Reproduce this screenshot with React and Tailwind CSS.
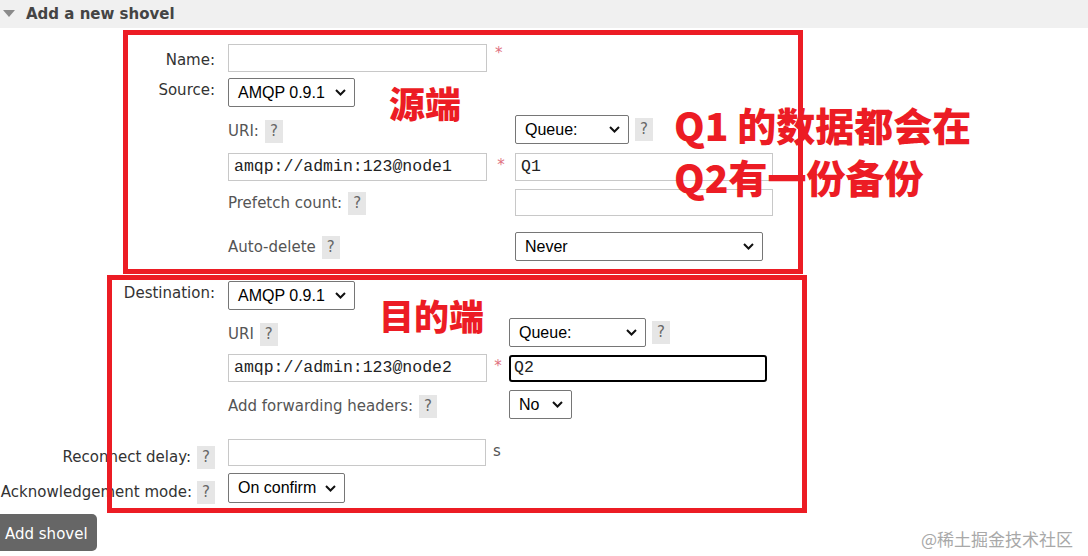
import React from 'react';

const sans = "font-['DejaVu_Sans',Verdana,sans-serif]";
const arial = "font-['Liberation_Sans',Arial,sans-serif]";
const mono = "font-['Liberation_Mono','Courier_New',monospace]";
const cjk = "font-['Noto_Sans_CJK_SC',sans-serif]";

function Help() {
  return (
    <span className={`inline-flex shrink-0 items-center justify-center w-[18px] h-[23px] bg-[#e6e6e6] text-[#666] text-[15px] ${sans}`}>
      ?
    </span>
  );
}

function Chevron() {
  return (
    <svg width="11" height="7" viewBox="0 0 11 7" className="shrink-0">
      <polyline points="1,1 5.5,5.5 10,1" fill="none" stroke="#111" strokeWidth="2" />
    </svg>
  );
}

function Select({ text, className }) {
  return (
    <div className={`flex items-center justify-between border border-[#767676] rounded-[2px] bg-white pl-[9px] pr-[8px] text-[16px] text-black ${arial} ${className}`}>
      <span>{text}</span>
      <Chevron />
    </div>
  );
}

function Input({ value, className }) {
  return (
    <div className={`flex items-center border border-[#c8c8c8] bg-white pl-[5px] text-[16.5px] text-[#222] ${mono} ${className}`}>
      {value}
    </div>
  );
}

function Star({ className }) {
  return <span className={`text-[#e07080] text-[15px] ${sans} ${className}`}>*</span>;
}

export default function App() {
  return (
    <div className="relative w-[1088px] h-[556px] bg-white overflow-hidden">
      {/* header */}
      <div className="flex items-center h-[28px] bg-[#f0f0f0]">
        <svg width="12" height="8" viewBox="0 0 12 8" className="ml-[3px]">
          <polygon points="0,0 12,0 6,7" fill="#8a8a8a" />
        </svg>
        <span className={`ml-[11px] text-[15px] font-bold text-[#444] ${sans}`}>Add a new shovel</span>
      </div>

      <div className={`text-[15px] text-[#333] ${sans}`}>
        {/* Name */}
        <div className="flex items-center mt-[16px] h-[28px]">
          <div className="w-[215px] text-right pt-[5px]">Name:</div>
          <div className="ml-[13px] flex items-start h-full">
            <Input value="" className="w-[259px] h-[28px]" />
            <Star className="ml-[8px] -mt-[2px]" />
          </div>
        </div>

        {/* Source */}
        <div className="flex items-center mt-[6px] h-[29px]">
          <div className="w-[215px] text-right -mt-[4px]">Source:</div>
          <Select text="AMQP 0.9.1" className="ml-[13px] w-[127px] h-[29px]" />
        </div>

        <div className="ml-[228px] text-[15px] text-[#555]">
          <div className="flex items-center mt-[8px] h-[29px]">
            <div className="w-[287px] flex items-center gap-[6px] pt-[4px]">
              <span>URI:</span>
              <Help />
            </div>
            <Select text="Queue:" className="w-[114px] h-[29px]" />
            <span className="ml-[6px]"><Help /></span>
          </div>
          <div className="flex items-center mt-[9px] h-[28px]">
            <Input value="amqp://admin:123@node1" className="w-[259px] h-[28px]" />
            <Star className="w-[28px] text-center -mt-[4px]" />
            <Input value="Q1" className="w-[258px] h-[28px]" />
          </div>
          <div className="flex items-center mt-[8px] h-[27px]">
            <div className="w-[287px] flex items-center gap-[6px] pt-[2px]">
              <span>Prefetch count:</span>
              <Help />
            </div>
            <Input value="" className="w-[258px] h-[27px]" />
          </div>
          <div className="flex items-center mt-[16px] h-[29px]">
            <div className="w-[287px] flex items-center gap-[6px] pt-[2px]">
              <span>Auto-delete</span>
              <Help />
            </div>
            <Select text="Never" className="w-[248px] h-[29px]" />
          </div>
        </div>

        {/* Destination */}
        <div className="flex items-center mt-[20px] h-[29px]">
          <div className="w-[215px] text-right -mt-[4px]">Destination:</div>
          <Select text="AMQP 0.9.1" className="ml-[13px] w-[127px] h-[29px]" />
        </div>

        <div className="ml-[228px] text-[15px] text-[#555]">
          <div className="flex items-center mt-[8px] h-[29px]">
            <div className="w-[281px] flex items-center gap-[6px] pt-[3px]">
              <span>URI</span>
              <Help />
            </div>
            <Select text="Queue:" className="w-[137px] h-[29px]" />
            <span className="ml-[6px]"><Help /></span>
          </div>
          <div className="flex items-center mt-[7px] h-[28px]">
            <Input value="amqp://admin:123@node2" className="w-[259px] h-[28px]" />
            <Star className="w-[22px] text-center -mt-[4px]" />
            <div className={`flex items-center w-[258px] h-[27px] border-2 border-black rounded-[3px] pl-[3px] text-[16.5px] text-[#222] ${mono}`}>
              Q2
            </div>
          </div>
          <div className="flex items-center mt-[8px] h-[29px]">
            <div className="w-[281px] flex items-center gap-[6px] pt-[3px]">
              <span>Add forwarding headers:</span>
              <Help />
            </div>
            <Select text="No" className="w-[63px] h-[29px]" />
          </div>
        </div>

        {/* Reconnect delay */}
        <div className="flex items-center mt-[20px] h-[27px]">
          <div className="w-[215px] shrink-0 flex items-center justify-end gap-[6px] pt-[10px]">
            <span className="whitespace-nowrap">Reconnect delay:</span>
            <Help />
          </div>
          <Input value="" className="ml-[13px] w-[258px] h-[27px]" />
          <span className="ml-[7px] text-[15px] text-[#555] -mt-[2px]">s</span>
        </div>

        {/* Ack mode */}
        <div className="flex items-center mt-[7px] h-[30px]">
          <div className="w-[215px] shrink-0 flex items-center justify-end gap-[5px] pt-[8px]">
            <span className="whitespace-nowrap">Acknowledgement mode:</span>
            <Help />
          </div>
          <Select text="On confirm" className="ml-[13px] w-[117px] h-[30px]" />
        </div>

        <button className={`mt-[11px] h-[37px] w-[97px] rounded-r-[5px] bg-[#666] text-white text-[15px] text-left pl-[5px] pt-[3px] ${sans}`}>
          Add shovel
        </button>
      </div>

      {/* annotations */}
      <div className="absolute left-[123px] top-[30px] w-[680px] h-[244px] border-[5px] border-[#ec1c24]" />
      <div className="absolute left-[107px] top-[275px] w-[700px] h-[238px] border-[5px] border-[#ec1c24]" />
      <div className={`absolute left-[389px] top-[78px] text-[36px] leading-[48px] font-black text-[#ec1c24] ${cjk}`}>源端</div>
      <div className={`absolute left-[379px] top-[291px] text-[35px] leading-[48px] font-black text-[#ec1c24] ${cjk}`}>目的端</div>
      <div className={`absolute left-[674px] top-[98px] text-[39px] leading-[52px] font-black text-[#ec1c24] ${cjk}`}>
        <div>Q1 的数据都会在</div>
        <div>Q2有一份备份</div>
      </div>
      <div className={`absolute left-[921px] top-[526px] text-[17px] text-[#a8a8a8] ${cjk}`}>@稀土掘金技术社区</div>
    </div>
  );
}
